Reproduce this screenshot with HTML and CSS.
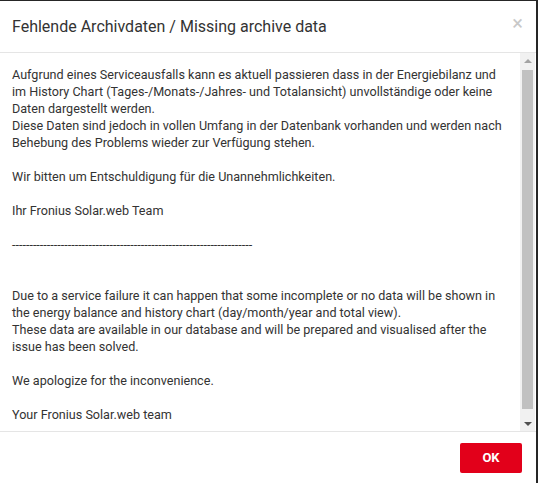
FILE: index.html
```html
<!DOCTYPE html>
<html>
<head>
<meta charset="utf-8">
<link rel="stylesheet" href="styles.css">
</head>
<body>
<div class="modal">
  <div class="modal-header">
    <h4 class="modal-title">Fehlende Archivdaten / Missing archive data</h4>
    <span class="close">×</span>
  </div>
  <div class="modal-body">
    <div class="body-text">
      <p>Aufgrund eines Serviceausfalls kann es aktuell passieren dass in der Energiebilanz und im History Chart (Tages-/Monats-/Jahres- und Totalansicht) unvollständige oder keine Daten dargestellt werden.<br>Diese Daten sind jedoch in vollen Umfang in der Datenbank vorhanden und werden nach Behebung des Problems wieder zur Verfügung stehen.<br><br>Wir bitten um Entschuldigung für die Unannehmlichkeiten.<br><br>Ihr Fronius Solar.web Team<br><br>---------------------------------------------------------------------<br><br><br>Due to a service failure it can happen that some incomplete or no data will be shown in the energy balance and history chart (day/month/year and total view).<br>These data are available in our database and will be prepared and visualised after the issue has been solved.<br><br>We apologize for the inconvenience.<br><br>Your Fronius Solar.web team</p>
    </div>
    <div class="scrollbar">
      <div class="sb-btn"><span class="arrow-up"></span></div>
      <div class="sb-thumb"></div>
      <div class="sb-btn"><span class="arrow-down"></span></div>
    </div>
  </div>
  <div class="modal-footer">
    <button class="btn-ok">OK</button>
  </div>
</div>
</body>
</html>
```
FILE: styles.css
```css
html, body {
  margin: 0;
  padding: 0;
  background: #262626;
  height: 483px;
  overflow: hidden;
}
.modal {
  margin-top: 1px;
  width: 536px;
  height: 482px;
  background: #fff;
  display: flex;
  flex-direction: column;
  font-family: Roboto, "Liberation Sans", sans-serif;
  color: #333;
}
.modal-header {
  height: 51px;
  border-bottom: 1px solid #e5e5e5;
  display: flex;
  align-items: center;
  justify-content: space-between;
  padding: 0 13px 0 12px;
  flex: none;
}
.modal-title {
  margin: 0;
  font-size: 16px;
  font-weight: 400;
  color: #333;
  margin-top: -1px;
}
.close {
  font-size: 20px;
  color: #c8c8c8;
  line-height: 1;
  margin-top: -8px;
}
.modal-body {
  flex: 1;
  min-height: 0;
  display: flex;
}
.body-text {
  flex: 1;
  overflow: hidden;
  padding: 13px 8px 0 12px;
}
.body-text p {
  margin: 0;
  font-size: 12.6px;
  line-height: 17px;
}
.scrollbar {
  width: 15px;
  flex: none;
  background: #f1f1f1;
  display: flex;
  flex-direction: column;
  margin-right: 1px;
}
.sb-btn {
  height: 15px;
  flex: none;
  display: flex;
  align-items: center;
  justify-content: center;
}
.arrow-up {
  width: 0;
  height: 0;
  border-left: 4px solid transparent;
  border-right: 4px solid transparent;
  border-bottom: 4px solid #a3a3a3;
}
.arrow-down {
  width: 0;
  height: 0;
  border-left: 4px solid transparent;
  border-right: 4px solid transparent;
  border-top: 4px solid #505050;
}
.sb-thumb {
  flex: 1;
  margin: 2px 2px 7px 2px;
  background: #c1c1c1;
}
.modal-footer {
  height: 51px;
  border-top: 1px solid #e5e5e5;
  display: flex;
  align-items: center;
  justify-content: flex-end;
  padding-right: 14px;
  flex: none;
}
.btn-ok {
  width: 62px;
  height: 30px;
  background: #e2001a;
  border: none;
  border-radius: 2px;
  color: #fff;
  font-family: Roboto, "Liberation Sans", sans-serif;
  font-weight: 700;
  font-size: 13px;
}
```
